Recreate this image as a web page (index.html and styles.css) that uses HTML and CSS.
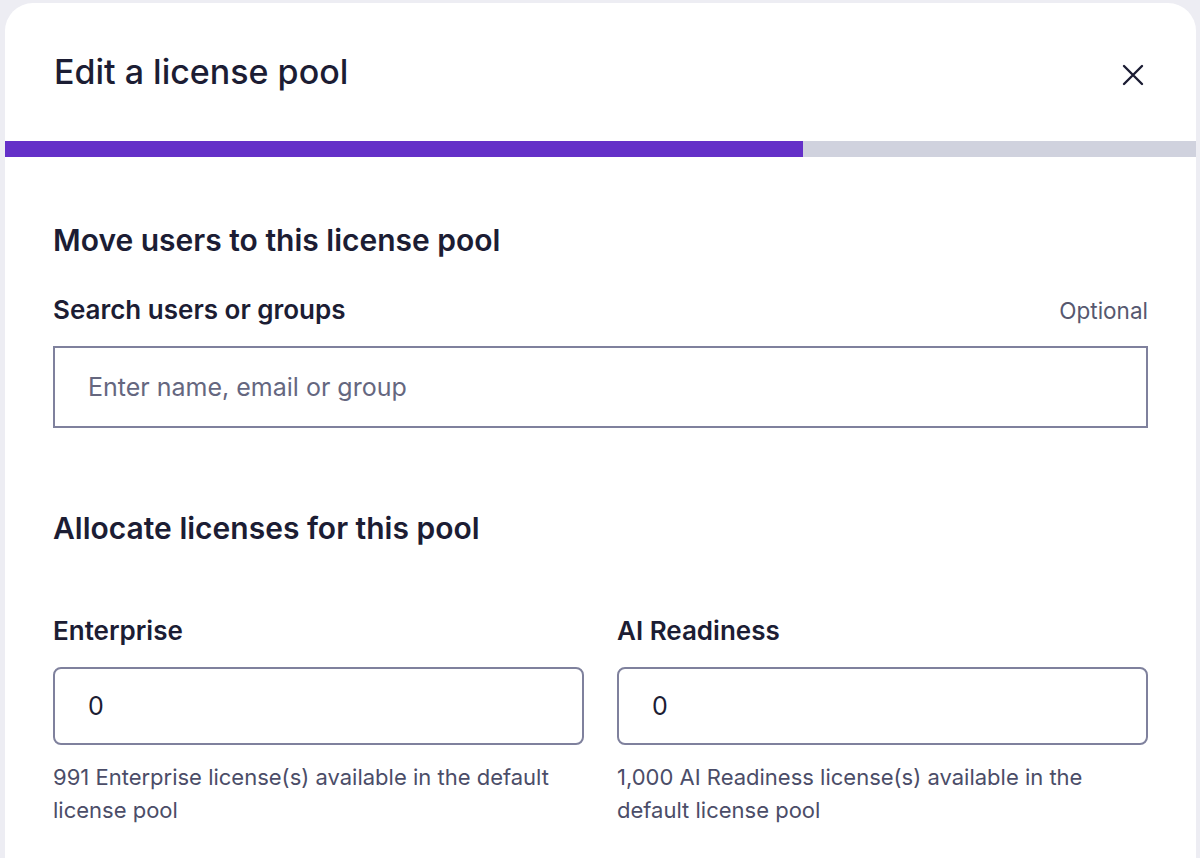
FILE: index.html
```html
<!DOCTYPE html>
<html>

<head>
    <title>Edit a license pool</title>
    <link rel="stylesheet" href="styles.css">
</head>

<body>
    <div class="modal">
        <div class="modal-header">
            <h1 class="modal-title">Edit a license pool</h1>
            <button class="close-btn" aria-label="Close">
                <svg width="22" height="22" viewBox="0 0 22 22">
                    <path d="M2 2 L20 20 M20 2 L2 20" stroke="#1b1c33" stroke-width="2.4" stroke-linecap="round" fill="none" />
                </svg>
            </button>
        </div>

        <div class="progress">
            <div class="progress-fill" style="width: 67%;"></div>
        </div>

        <div class="modal-body">
            <div class="section">
                <div class="section-title">Move users to this license pool</div>
                <div class="field-head">
                    <label class="field-label" for="searchInput">Search users or groups</label>
                    <span class="field-optional">Optional</span>
                </div>
                <input type="text" id="searchInput" class="search-input" placeholder="Enter name, email or group">
            </div>

            <div class="section section-allocate">
                <div class="section-title">Allocate licenses for this pool</div>
                <div class="license-grid">
                    <div class="license-field">
                        <label class="field-label" for="enterpriseInput">Enterprise</label>
                        <input type="text" id="enterpriseInput" class="number-input" value="0">
                        <div class="field-help">991 Enterprise license(s) available in the default license pool</div>
                    </div>
                    <div class="license-field">
                        <label class="field-label" for="aiInput">AI Readiness</label>
                        <input type="text" id="aiInput" class="number-input" value="0">
                        <div class="field-help">1,000 AI Readiness license(s) available in the default license pool</div>
                    </div>
                </div>
            </div>
        </div>
    </div>
</body>

</html>
```

FILE: styles.css
```css
body {
    margin: 0;
    padding: 3px 4px 0 5px;
    font-family: Inter, "Noto Sans", sans-serif;
    background-color: #ededf3;
    color: #1c1d34;
    overflow: hidden;
}

.modal {
    background: white;
    border-radius: 28px 28px 0 0;
    min-height: 900px;
    overflow: hidden;
}

.modal-header {
    display: flex;
    align-items: center;
    justify-content: space-between;
    height: 138px;
    padding: 0 48px 0 49px;
    box-sizing: border-box;
}

.modal-title {
    margin: 0;
    font-size: 34px;
    line-height: 40px;
    font-weight: 500;
    color: #1c1d34;
}

.close-btn {
    border: none;
    background: none;
    padding: 0;
    margin-right: 4px;
    margin-top: 6px;
    width: 22px;
    height: 22px;
    cursor: pointer;
}

.close-btn svg {
    display: block;
}

.progress {
    height: 16px;
    background: #d0d2de;
}

.progress-fill {
    height: 100%;
    background: #6430c8;
}

.modal-body {
    padding: 65px 48px 0 48px;
}

.section-title {
    font-size: 30px;
    line-height: 36px;
    font-weight: 600;
    color: #1c1d34;
}

.field-head {
    display: flex;
    justify-content: space-between;
    align-items: center;
    margin-top: 37px;
}

.field-label {
    display: block;
    font-size: 26px;
    line-height: 30px;
    font-weight: 600;
    color: #1c1d34;
}

.field-optional {
    font-size: 22.5px;
    color: #56586f;
}

.search-input {
    display: block;
    width: 100%;
    box-sizing: border-box;
    height: 82px;
    margin-top: 21px;
    padding: 0 33px;
    border: 2px solid #7f819d;
    border-radius: 0;
    font-family: inherit;
    font-size: 25px;
    color: #1c1d34;
    outline: none;
}

.search-input::placeholder {
    color: #65677f;
}

.section-allocate {
    margin-top: 82px;
}

.license-grid {
    display: grid;
    grid-template-columns: 1fr 1fr;
    gap: 33px;
    margin-top: 70px;
}

.number-input {
    display: block;
    width: 100%;
    box-sizing: border-box;
    height: 78px;
    margin-top: 21px;
    padding: 0 33px;
    border: 2px solid #7f819d;
    border-radius: 8px;
    font-family: inherit;
    font-size: 25px;
    color: #1c1d34;
    outline: none;
}

.field-help {
    margin-top: 16px;
    font-size: 22px;
    line-height: 33px;
    color: #4b4d68;
}
```
